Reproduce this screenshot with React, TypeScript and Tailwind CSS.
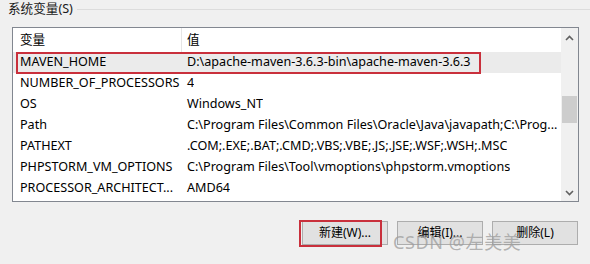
import React from 'react';

const rows: [string, string][] = [
  ['MAVEN_HOME', 'D:\\apache-maven-3.6.3-bin\\apache-maven-3.6.3'],
  ['NUMBER_OF_PROCESSORS', '4'],
  ['OS', 'Windows_NT'],
  ['Path', 'C:\\Program Files\\Common Files\\Oracle\\Java\\javapath;C:\\Prog...'],
  ['PATHEXT', '.COM;.EXE;.BAT;.CMD;.VBS;.VBE;.JS;.JSE;.WSF;.WSH;.MSC'],
  ['PHPSTORM_VM_OPTIONS', 'C:\\Program Files\\Tool\\vmoptions\\phpstorm.vmoptions'],
  ['PROCESSOR_ARCHITECT...', 'AMD64'],
];

const Chevron = ({ down }: { down?: boolean }) => (
  <svg width="9" height="6" viewBox="0 0 9 6" className="text-[#606060]">
    <path
      d={down ? 'M1 1 L4.5 4.5 L8 1' : 'M1 5 L4.5 1.5 L8 5'}
      fill="none"
      stroke="currentColor"
      strokeWidth="1.6"
    />
  </svg>
);

const App: React.FC = () => {
  return (
    <div
      className="w-[590px] h-[264px] bg-[#f0f0f0] overflow-hidden relative text-[12.6px] text-black"
      style={{ fontFamily: '"Noto Sans", "Noto Sans CJK SC", sans-serif' }}
    >
      {/* group box title */}
      <div className="flex items-center h-[17px] pl-[8px]">
        <span className="leading-[16px] text-[#1a1a1a]">系统变量(S)</span>
        <div className="flex-1 h-px bg-[#dcdcdc] ml-[4px] mt-[1px]" />
      </div>

      {/* list view */}
      <div className="ml-[12px] mt-[10px] w-[567px] h-[175px] border border-[#828790] bg-white flex">
        <div className="flex-1 flex flex-col">
          <div className="flex h-[24px] items-center">
            <div className="w-[169px] pl-[7px] border-r border-[#e5e5e5] h-full flex items-center">变量</div>
            <div className="pl-[5px]">值</div>
          </div>
          {rows.map(([name, value], i) => (
            <div
              key={name}
              className={`flex h-[21px] items-center whitespace-nowrap ${i === 0 ? 'bg-[#ebebeb]' : ''}`}
            >
              <div className="w-[170px] pl-[7px] overflow-hidden">{name}</div>
              <div className="pl-[4px] overflow-hidden">{value}</div>
            </div>
          ))}
        </div>
        {/* scrollbar */}
        <div className="w-[17px] bg-[#f0f0f0] flex flex-col items-center">
          <div className="h-[17px] flex items-center justify-center mt-[1px]">
            <Chevron />
          </div>
          <div className="w-[15px] h-[27px] bg-[#cdcdcd] mt-[50px]" />
          <div className="flex-1" />
          <div className="h-[17px] flex items-center justify-center">
            <Chevron down />
          </div>
        </div>
      </div>

      {/* buttons */}
      <div className="flex justify-end gap-[9px] pr-[12px] mt-[19px] text-[12px]">
        {['新建(W)...', '编辑(I)...', '删除(L)'].map(label => (
          <div
            key={label}
            className="w-[86px] h-[24px] bg-[#e1e1e1] border border-[#adadad] flex items-center justify-center"
          >
            {label}
          </div>
        ))}
      </div>

      {/* red highlight boxes */}
      <div className="absolute left-[16px] top-[52px] w-[465px] h-[22px] border-2 border-[#c9303c] pointer-events-none" />
      <div className="absolute left-[299px] top-[220px] w-[83px] h-[27px] border-2 border-[#c9303c] pointer-events-none" />

      {/* watermark */}
      <div className="absolute left-[393px] top-[231px] text-[18px] text-[#9c9c9c]/75 leading-[22px] tracking-[0.6px] pointer-events-none">
        CSDN @左美美
      </div>
    </div>
  );
};

export default App;
